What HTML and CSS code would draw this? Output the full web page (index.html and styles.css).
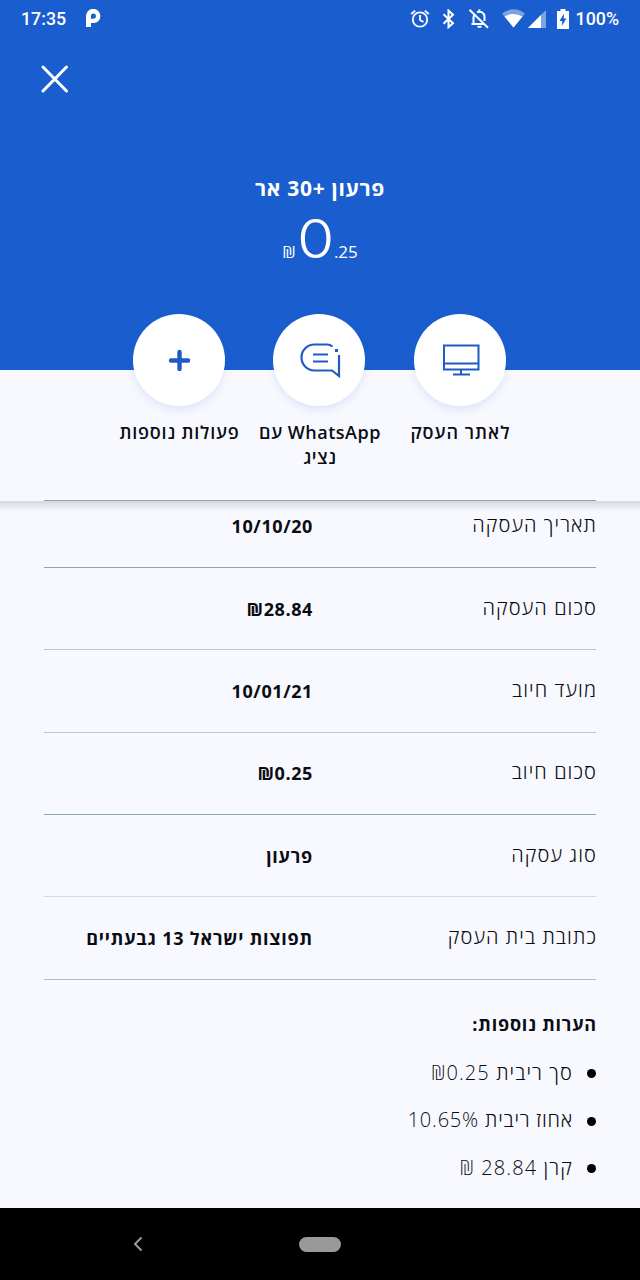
FILE: index.html
```html
<!DOCTYPE html>
<html lang="he" dir="rtl">
<head>
  <meta charset="UTF-8">
  <title>פרטי עסקה</title>
  <link rel="stylesheet" href="styles.css">
</head>
<body>
<div class="screen">
  <header class="hero">
    <div class="status-bar" dir="ltr">
      <span class="time">17:35</span>
      <svg class="app-icon" width="15" height="20" viewBox="0 0 15 20"><path d="M0 18V7a7.200 7.200 0 0 1 14.400 0Q14 13.500 7.500 14H5v4zM7.300 4.500a2.300 2.300 0 0 0-2.300 2.500v2.700h2.300a2.600 2.600 0 0 0 0-5.200z" fill="#fff" fill-rule="evenodd"/></svg>
      <div class="status-icons">
        <svg width="20" height="20" viewBox="0 0 20 20" fill="none" stroke="#fff" stroke-width="1.8"><circle cx="10" cy="10.500" r="7.200"/><path d="M10 6v5l3.500 2M1.200 5l4-3.400M18.800 5l-4-3.400"/></svg>
        <svg class="bluetooth" width="13" height="20" viewBox="0 0 13 20" fill="none" stroke="#fff" stroke-width="2"><path d="M1.500 5.200l9.500 9-4.500 4V1.500l4.500 4.200-9.500 9"/></svg>
        <svg class="bell" width="20" height="20" viewBox="0 0 20 20" fill="none" stroke="#fff" stroke-width="2"><path d="M4.500 15V9q0-2 1-3.500M8 3.400a5 5 0 0 1 7.500 4.600v4M2.500 15h12.500M10.300.5v2.500M.5.800l18.500 18"/><path d="M8.500 17.800h4" stroke-width="2"/></svg>
        <svg class="wifi" width="23" height="19" viewBox="0 0 23 19"><path d="M0 4.500Q11.500-4 23 4.500L11.500 18.500z" fill="#7ea3e2"/><path d="M2.500 7.500q9-5 18 0l-9 11z" fill="#fff"/></svg>
        <svg class="signal" width="18" height="18" viewBox="0 0 18 18"><path d="M0 18L18 0v18z" fill="#7ea3e2"/><path d="M0 18L13 5v13z" fill="#fff"/></svg>
        <svg class="battery" width="12" height="20" viewBox="0 0 12 20"><path d="M0 2h3.500V0h5v2H12v18H0z" fill="#fff"/><path d="M7 4.500L2.500 12h2.700L4.800 17 9.500 9.500H6.700z" fill="#1a5dce"/></svg>
        <span class="percent">100%</span>
      </div>
    </div>
    <div class="toolbar">
      <svg class="close" width="28" height="28" viewBox="0 0 28 28"><path d="M2 2l23.500 24M25.500 2L2 26" stroke="#fff" stroke-width="3" stroke-linecap="round"/></svg>
    </div>
    <h1 class="title">פרעון +30 אר</h1>
    <div class="amount" dir="ltr">
      <span class="currency">₪</span><span class="whole">0</span><span class="cents">.25</span>
    </div>
  </header>

  <nav class="actions">
    <div class="action">
      <div class="circle">
        <svg class="monitor" width="38" height="32" viewBox="0 0 38 32" fill="none" stroke="#1e5cc4" stroke-width="2"><path d="M2 1.500h34.500v24H2zM2 19.500h34.500M19 25.500v5M11 30.500h17"/></svg>
      </div>
      <span class="action-label site">לאתר העסק</span>
    </div>
    <div class="action">
      <div class="circle">
        <svg class="chat" width="42" height="36" viewBox="0 0 42 36" fill="none" stroke="#1e5cc4" stroke-width="2.200"><path d="M33.500 4.500Q31 2.500 28 2.500H15.500a13 13 0 0 0 0 26H33l7 5.500V13M14 12.500h15M14 19.500h15"/><path d="M36 8.500h3" stroke-width="3"/></svg>
      </div>
      <span class="action-label whatsapp">WhatsApp עם נציג</span>
    </div>
    <div class="action">
      <div class="circle">
        <svg width="22" height="22" viewBox="0 0 22 22"><path d="M11.500 3v17M3 11.500h17" stroke="#1e5cc4" stroke-width="4.400" stroke-linecap="round"/></svg>
      </div>
      <span class="action-label">פעולות נוספות</span>
    </div>
  </nav>

  <main class="details">
    <dl class="rows">
      <div class="row first"><dt>תאריך העסקה</dt><dd class="date">10/10/20</dd></div>
      <div class="row"><dt>סכום העסקה</dt><dd class="sum">₪28.84</dd></div>
      <div class="row"><dt>מועד חיוב</dt><dd class="date">10/01/21</dd></div>
      <div class="row dark"><dt>סכום חיוב</dt><dd class="sum">₪0.25</dd></div>
      <div class="row light"><dt>סוג עסקה</dt><dd>פרעון</dd></div>
      <div class="row last"><dt>כתובת בית העסק</dt><dd>תפוצות ישראל 13 גבעתיים</dd></div>
    </dl>
    <h2 class="notes-title">הערות נוספות:</h2>
    <ul class="notes">
      <li>סך ריבית ₪0.25</li>
      <li class="rate">אחוז ריבית 10.65%</li>
      <li>קרן 28.84 ₪</li>
    </ul>
  </main>

  <footer class="nav-bar" dir="ltr">
    <svg class="back" width="10" height="16" viewBox="0 0 10 16"><path d="M8.500 1.500L2 8l6.500 6.500" fill="none" stroke="#999" stroke-width="2"/></svg>
    <span class="home"></span>
  </footer>
</div>
</body>
</html>
```

FILE: styles.css
```css
* {
  margin: 0;
  padding: 0;
  box-sizing: border-box;
}
body {
  background-color: #f8f9ff;
  font-family: "Open Sans", "DejaVu Sans", sans-serif;
  color: #0a0c12;
}
svg {
  display: block;
}
.screen {
  width: 640px;
  height: 1280px;
  display: flex;
  flex-direction: column;
  overflow: hidden;
}

/* hero */
.hero {
  height: 370px;
  flex: none;
  background-color: #1a5dce;
  color: #fff;
}
.status-bar {
  height: 37px;
  padding: 0 21px;
  display: flex;
  align-items: center;
  font: 500 17.800px Roboto, sans-serif;
}
.app-icon {
  margin-left: 20px;
}
.status-icons {
  margin-left: auto;
  display: flex;
  align-items: center;
}
.bluetooth {
  margin-left: 12px;
}
.bell {
  margin-left: 14px;
}
.wifi {
  margin-left: 13px;
}
.signal {
  margin-left: 3px;
}
.battery {
  margin-left: 11px;
}
.percent {
  margin-left: 7px;
}
.toolbar {
  height: 84px;
  padding: 28px 41px;
  display: flex;
  justify-content: flex-end;
}
.title {
  margin-top: 53px;
  text-align: center;
  font-size: 21px;
  line-height: 28px;
  font-weight: 700;
  letter-spacing: .7px;
}
.amount {
  margin-top: 9px;
  height: 56px;
  display: flex;
  justify-content: center;
  align-items: baseline;
  line-height: 56px;
  font-size: 17px;
}
.whole {
  margin: 0 2px 0 3px;
  font-family: Inter, sans-serif;
  font-size: 54px;
  font-weight: 300;
  transform: scaleX(1.120);
}

/* round buttons */
.actions {
  height: 130px;
  flex: none;
  padding-right: 2px;
  display: flex;
  justify-content: center;
}
.action {
  width: 140.500px;
  margin-top: -56px;
  display: flex;
  flex-direction: column;
  align-items: center;
}
.circle {
  width: 92px;
  height: 92px;
  flex: none;
  border-radius: 50%;
  background-color: #fff;
  box-shadow: 0 4px 8px rgba(26, 93, 206, .12);
  display: flex;
  align-items: center;
  justify-content: center;
}
.monitor,
.chat {
  margin-left: 2px;
}
.action-label {
  margin-top: 14px;
  margin-right: 1px;
  width: 134px;
  padding-left: 3px;
  text-align: center;
  font-size: 18px;
  line-height: 25px;
  font-weight: 600;
  letter-spacing: .8px;
}
.site {
  letter-spacing: 1px;
}
.whatsapp {
  letter-spacing: .5px;
}

/* details */
.details {
  flex: 1;
  padding: 0 44px;
  background: linear-gradient(#f8f9ff 1px, #d5d8df 1px, #e3e5ec 5px, #f8f9ff 11px);
}
.row {
  height: 82.350px;
  display: flex;
  align-items: center;
  border-bottom: 1px solid #b9c7da;
}
.row.first {
  height: 68px;
  padding-bottom: 16px;
  border-top: 1px solid #8fa5b8;
  border-color: #8fa5b8;
}
.row.dark {
  border-color: #8fa5b8;
}
.row.light {
  border-color: #d3d9e5;
}
.row.last {
  border-color: #b7bac4;
}
.row dt {
  width: 285px;
  margin-right: -1px;
  padding-bottom: 3px;
  font-size: 20px;
  font-weight: 300;
  letter-spacing: 1.100px;
}
.row dd {
  margin-right: -1px;
  font-size: 18px;
  font-weight: 700;
  letter-spacing: .8px;
  white-space: nowrap;
}
.row .date,
.row .sum {
  letter-spacing: .6px;
}
.notes-title {
  margin-top: 31px;
  margin-right: -1px;
  font-size: 18px;
  line-height: 26px;
  font-weight: 700;
  letter-spacing: .8px;
}
.notes {
  list-style: none;
  margin-top: 12px;
}
.notes li {
  height: 47.500px;
  display: flex;
  align-items: center;
  font-size: 20px;
  font-weight: 300;
  letter-spacing: 1.100px;
}
.notes .rate {
  letter-spacing: .8px;
}
.notes li::before {
  content: "";
  width: 9px;
  height: 9px;
  margin-top: 3px;
  margin-left: 14px;
  border-radius: 50%;
  background-color: #000;
}

/* android navigation */
.nav-bar {
  height: 72px;
  flex: none;
  background-color: #000;
  display: flex;
  align-items: center;
}
.back {
  margin-left: 133px;
}
.home {
  width: 42px;
  height: 15px;
  margin-left: 156px;
  border-radius: 8px;
  background-color: #999;
}
```
